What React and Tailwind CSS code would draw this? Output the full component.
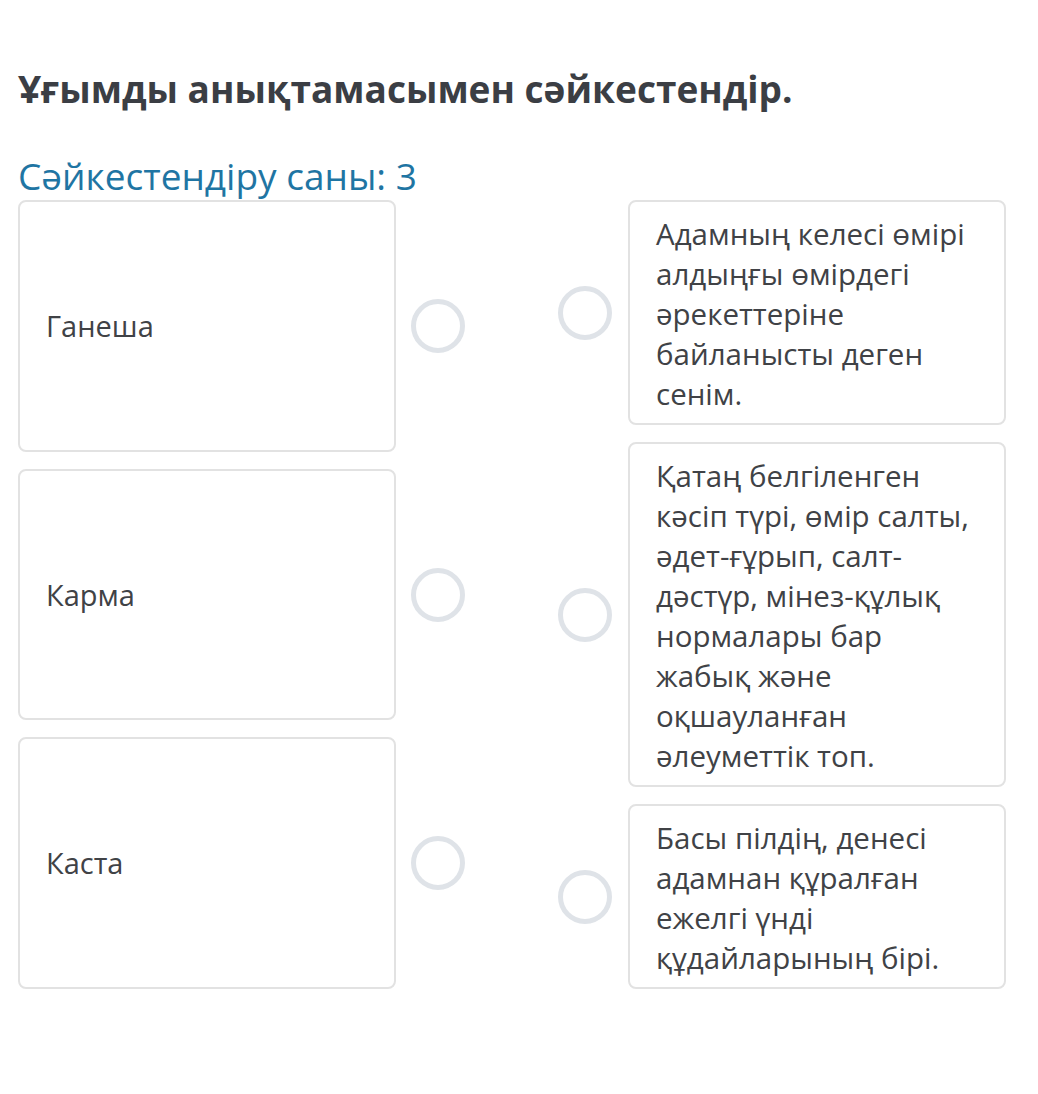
const terms = ["Ганеша", "Карма", "Каста"];

const definitions = [
  "Адамның келесі өмірі алдыңғы өмірдегі әрекеттеріне байланысты деген сенім.",
  "Қатаң белгіленген кәсіп түрі, өмір салты, әдет-ғұрып, салт-дәстүр, мінез-құлық нормалары бар жабық және оқшауланған әлеуметтік топ.",
  "Басы пілдің, денесі адамнан құралған ежелгі үнді құдайларының бірі.",
];

function Circle() {
  return <div className="w-[54px] h-[54px] rounded-full border-[5px] border-[#dfe3e8] shrink-0" />;
}

export default function App() {
  return (
    <div
      className="min-h-[1094px] bg-white pl-[18px] pr-[32px] pt-[64px] text-[#404246]"
      style={{ fontFamily: '"Open Sans", "Noto Sans", sans-serif' }}
    >
      <h1 className="text-[37px] font-bold leading-[50px] text-[#3b3e44]">
        Ұғымды анықтамасымен сәйкестендір.
      </h1>
      <p className="mt-[38px] text-[37px] leading-[48px] text-[#1f75a3]">Сәйкестендіру саны: 3</p>

      <div className="flex">
        <div className="flex flex-col gap-[17px] w-[468px]">
          {terms.map((t) => (
            <div key={t} className="flex-1 flex items-center">
              <div className="self-stretch w-[378px] flex items-center rounded-lg border-2 border-[#e2e2e2] px-[26px] text-[29px]">
                {t}
              </div>
              <div className="ml-[15px]">
                <Circle />
              </div>
            </div>
          ))}
        </div>
        <div className="ml-[73px] flex flex-col gap-[17px]">
          {definitions.map((d) => (
            <div key={d} className="flex items-center">
              <Circle />
              <div className="ml-[16px] w-[378px] rounded-lg border-2 border-[#e2e2e2] pl-[26px] pr-[30px] pt-[12px] pb-[9px] text-[29.5px] leading-[40px]">
                {d}
              </div>
            </div>
          ))}
        </div>
      </div>
    </div>
  );
}
